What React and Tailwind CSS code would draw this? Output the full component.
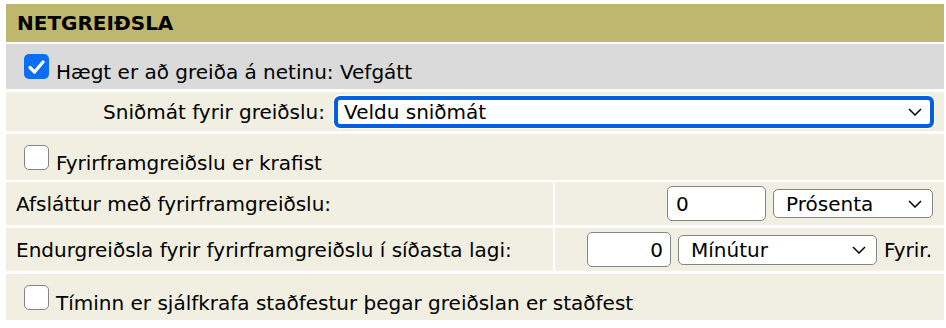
import React from "react";

const Check = ({ checked }) =>
  checked ? (
    <div className="w-[25px] h-[25px] rounded-[5px] bg-[#0b6ef6] flex items-center justify-center shrink-0">
      <svg width="17" height="14" viewBox="0 0 17 14">
        <path d="M2 7.5 L6.5 12 L15 2" fill="none" stroke="white" strokeWidth="3.2" strokeLinecap="round" strokeLinejoin="round" />
      </svg>
    </div>
  ) : (
    <div className="w-[25px] h-[25px] rounded-[5px] border-[1.5px] border-[#858585] bg-white shrink-0" />
  );

const Chevron = () => (
  <svg width="14" height="8" viewBox="0 0 14 8" className="shrink-0">
    <path d="M1 1 L7 7 L13 1" fill="none" stroke="black" strokeWidth="1.5" />
  </svg>
);

const Select = ({ text, className }) => (
  <div className={`flex items-center justify-between bg-white rounded-[5px] border-[1.5px] border-[#858585] pl-[12px] pr-[10px] ${className}`}>
    <span>{text}</span>
    <Chevron />
  </div>
);

// checkbox row: box centred, label baseline on the box bottom
const CheckRow = ({ checked, label, className }) => (
  <div className={`flex items-center pl-[18px] ${className}`}>
    <div className="flex items-end gap-[7px]">
      <Check checked={checked} />
      <span className="mb-[-3px]">{label}</span>
    </div>
  </div>
);

export default function App() {
  return (
    <div className="w-[946px] h-[328px] bg-white pt-[4px] pl-[6px] pr-[2px] font-['DejaVu_Sans',Verdana,sans-serif] text-[20px] leading-none text-black">
      {/* Header */}
      <div className="h-[38px] bg-[#bfb76e] flex items-center pl-[11px] font-bold">NETGREIÐSLA</div>

      <CheckRow checked label="Hægt er að greiða á netinu: Vefgátt" className="mt-[2px] h-[45px] bg-[#dadada]" />

      {/* Sniðmát */}
      <div className="mt-[3px] h-[39px] bg-[#f1efe1] flex items-center pr-[9px]">
        <span className="flex-1 text-right pr-[8px] pt-[1px]">Sniðmát fyrir greiðslu:</span>
        <div className="w-[602px] h-[34px] rounded-[7px] bg-white p-[1px]">
          <div className="h-full rounded-[6px] border-[4px] border-[#0060df] flex items-center justify-between pl-[6px] pr-[8px]">
            <span className="pt-[1px]">Veldu sniðmát</span>
            <Chevron />
          </div>
        </div>
      </div>

      <CheckRow label="Fyrirframgreiðslu er krafist" className="mt-[3px] h-[46px] bg-[#f1efe1]" />

      {/* Afsláttur */}
      <div className="mt-[2px] h-[43px] flex gap-[2px]">
        <div className="w-[547px] bg-[#f1efe1] flex items-center pl-[10px] pt-[1px]">Afsláttur með fyrirframgreiðslu:</div>
        <div className="flex-1 bg-[#f1efe1] flex items-center justify-end pr-[11px] gap-[7px]">
          <div className="w-[99px] h-[35px] bg-white rounded-[5px] border-[1.5px] border-[#858585] flex items-center pl-[8px]">0</div>
          <Select text="Prósenta" className="w-[160px] h-[29px]" />
        </div>
      </div>

      {/* Endurgreiðsla */}
      <div className="mt-[3px] h-[43px] flex gap-[2px]">
        <div className="w-[547px] bg-[#f1efe1] flex items-center pl-[10px] pt-[1px]">Endurgreiðsla fyrir fyrirframgreiðslu í síðasta lagi:</div>
        <div className="flex-1 bg-[#f1efe1] flex items-center justify-end pr-[12px] gap-[7px]">
          <div className="w-[84px] h-[35px] bg-white rounded-[5px] border-[1.5px] border-[#858585] flex items-center justify-end pr-[7px]">0</div>
          <Select text="Mínútur" className="w-[199px] h-[30px]" />
          <span>Fyrir.</span>
        </div>
      </div>

      <CheckRow label="Tíminn er sjálfkrafa staðfestur þegar greiðslan er staðfest" className="mt-[3px] h-[46px] bg-[#f1efe1]" />
    </div>
  );
}
